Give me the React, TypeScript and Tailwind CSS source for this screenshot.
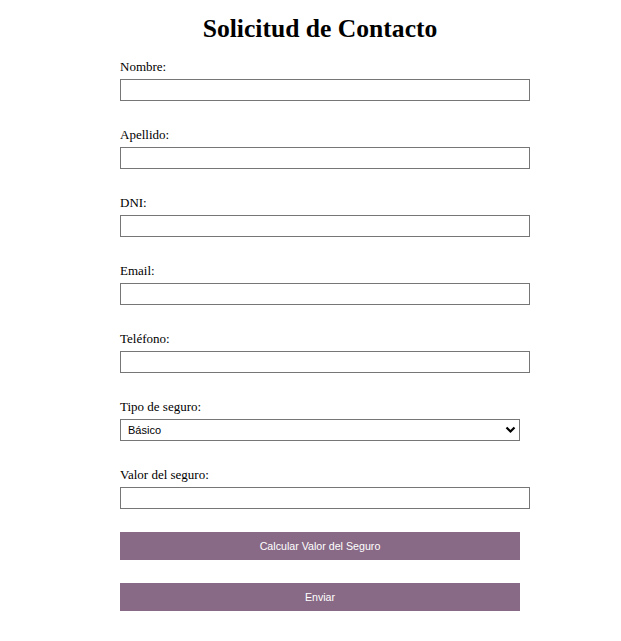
import React from "react";

const serif = { fontFamily: '"Liberation Serif", "Times New Roman", serif' };
const sans = { fontFamily: '"Liberation Sans", Arial, sans-serif' };

function Field({ label }: { label: string }) {
  return (
    <div className="mb-[26px]">
      <label className="block text-[13px] leading-[15px] mb-[5px] text-black">{label}</label>
      <input type="text" className="block w-[410px] h-[22px] border border-[#767676] bg-white px-1 outline-none" />
    </div>
  );
}

export default function App() {
  return (
    <div className="min-h-[641px] bg-white text-black" style={serif}>
      <div className="ml-[120px] w-[400px] pt-[14px]">
        <h1 className="text-center text-[25.6px] font-bold leading-[30px] mb-[15px]">Solicitud de Contacto</h1>
        <form onSubmit={(e) => e.preventDefault()}>
          <Field label="Nombre:" />
          <Field label="Apellido:" />
          <Field label="DNI:" />
          <Field label="Email:" />
          <Field label="Teléfono:" />
          <div className="mb-[26px]">
            <label className="block text-[13px] leading-[15px] mb-[5px]">Tipo de seguro:</label>
            <div className="relative w-[400px] h-[22px]">
              <select
                className="block w-full h-full appearance-none border border-[#767676] bg-white pl-[7px] text-[11px] text-black outline-none"
                style={sans}
                defaultValue="basico"
              >
                <option value="basico">Básico</option>
                <option value="intermedio">Intermedio</option>
                <option value="premium">Premium</option>
              </select>
              <svg className="pointer-events-none absolute right-[4px] top-[6px]" width="11" height="10" viewBox="0 0 11 10">
                <path d="M1.5 2.5 L5.5 6.5 L9.5 2.5" fill="none" stroke="#000" strokeWidth="2.2" />
              </svg>
            </div>
          </div>
          <div className="mb-[23px]">
            <label className="block text-[13px] leading-[15px] mb-[5px]">Valor del seguro:</label>
            <input type="text" readOnly className="block w-[410px] h-[22px] border border-[#767676] bg-white px-1 outline-none" />
          </div>
          <button
            type="button"
            className="block w-[400px] h-[28px] bg-[#886a86] text-white text-[10.67px] mb-[23px]"
            style={sans}
          >
            Calcular Valor del Seguro
          </button>
          <button
            type="submit"
            className="block w-[400px] h-[28px] bg-[#886a86] text-white text-[10.67px]"
            style={sans}
          >
            Enviar
          </button>
        </form>
      </div>
    </div>
  );
}
